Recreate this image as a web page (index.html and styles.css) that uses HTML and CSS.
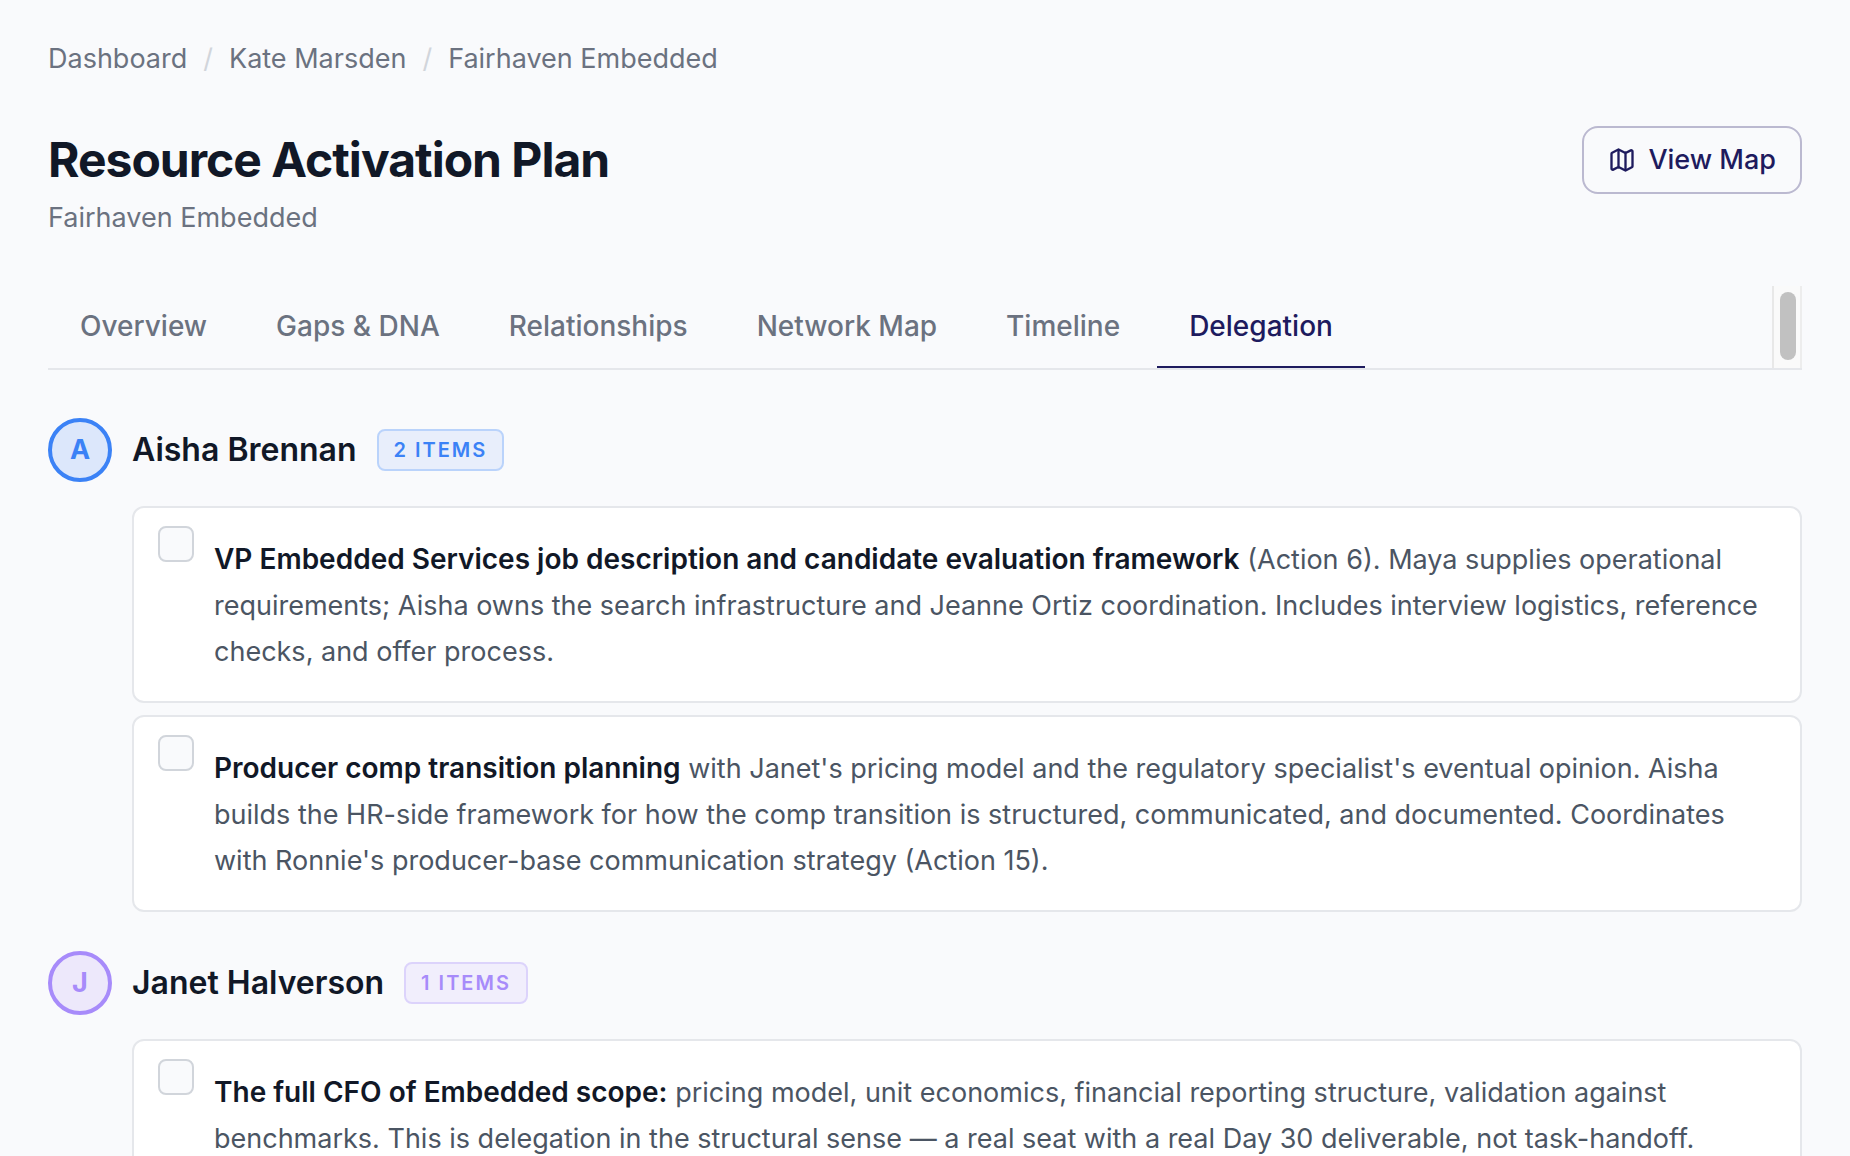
FILE: index.html
```html
<!DOCTYPE html>
<html lang="en">
<head>
<meta charset="utf-8">
<meta name="viewport" content="width=device-width, initial-scale=1">
<title>Resource Activation Plan</title>
<link rel="stylesheet" href="styles.css">
</head>
<body>
<main class="page">
  <nav class="breadcrumb" aria-label="Breadcrumb">
    <a href="#">Dashboard</a>
    <span class="breadcrumb-sep">/</span>
    <a href="#">Kate Marsden</a>
    <span class="breadcrumb-sep">/</span>
    <a href="#">Fairhaven Embedded</a>
  </nav>

  <header class="page-header">
    <div>
      <h1 class="title">Resource Activation Plan</h1>
      <p class="subtitle">Fairhaven Embedded</p>
    </div>
    <button class="map-button" type="button">
      <svg class="map-icon" viewBox="0 0 24 24" fill="none" stroke="currentColor" stroke-width="2" stroke-linecap="round" stroke-linejoin="round" aria-hidden="true">
        <path d="M14.106 5.553a2 2 0 0 0 1.788 0l3.659-1.83A1 1 0 0 1 21 4.619v12.764a1 1 0 0 1-.553.894l-4.553 2.277a2 2 0 0 1-1.788 0l-4.212-2.106a2 2 0 0 0-1.788 0l-3.659 1.83A1 1 0 0 1 3 19.381V6.618a1 1 0 0 1 .553-.894l4.553-2.277a2 2 0 0 1 1.788 0z"/>
        <path d="M15 5.764v15"/>
        <path d="M9 3.236v15"/>
      </svg>
      View Map
    </button>
  </header>

  <div class="tabs-bar">
    <nav class="tabs" aria-label="Plan sections">
      <a class="tab" href="#">Overview</a>
      <a class="tab" href="#">Gaps &amp; DNA</a>
      <a class="tab" href="#">Relationships</a>
      <a class="tab" href="#">Network Map</a>
      <a class="tab" href="#">Timeline</a>
      <a class="tab tab-active" href="#" aria-current="page">Delegation</a>
    </nav>
    <div class="scroll-track"><div class="scroll-thumb"></div></div>
  </div>

  <section class="person person-blue">
    <div class="person-header">
      <span class="avatar">A</span>
      <h2 class="person-name">Aisha Brennan</h2>
      <span class="badge">2 ITEMS</span>
    </div>
    <ul class="items">
      <li class="item">
        <input class="check" type="checkbox" id="item-1">
        <label class="item-text" for="item-1"><strong>VP Embedded Services job description and candidate evaluation framework</strong> (Action 6). Maya supplies operational requirements; Aisha owns the search infrastructure and Jeanne Ortiz coordination. Includes interview logistics, reference checks, and offer process.</label>
      </li>
      <li class="item">
        <input class="check" type="checkbox" id="item-2">
        <label class="item-text" for="item-2"><strong>Producer comp transition planning</strong> with Janet's pricing model and the regulatory specialist's eventual opinion. Aisha builds the HR-side framework for how the comp transition is structured, communicated, and documented. Coordinates with Ronnie's producer-base communication strategy (Action 15).</label>
      </li>
    </ul>
  </section>

  <section class="person person-violet">
    <div class="person-header">
      <span class="avatar">J</span>
      <h2 class="person-name">Janet Halverson</h2>
      <span class="badge">1 ITEMS</span>
    </div>
    <ul class="items">
      <li class="item">
        <input class="check" type="checkbox" id="item-3">
        <label class="item-text" for="item-3"><strong>The full CFO of Embedded scope:</strong> pricing model, unit economics, financial reporting structure, validation against benchmarks. This is delegation in the structural sense — a real seat with a real Day 30 deliverable, not task-handoff.</label>
      </li>
    </ul>
  </section>
</main>
</body>
</html>
```
FILE: styles.css
```css
* {
  box-sizing: border-box;
}

html {
  scrollbar-width: none;
}

body {
  margin: 0;
  background: #f9fafc;
  color: #111827;
  font-family: Inter, "Liberation Sans", sans-serif;
  font-size: 27px;
  line-height: 40px;
}

a {
  color: inherit;
  text-decoration: none;
}

h1,
h2,
p,
ul {
  margin: 0;
  padding: 0;
}

.page {
  padding: 39px 48px;
}

.breadcrumb {
  display: flex;
  gap: 16px;
  color: #6b7280;
}

.breadcrumb-sep {
  color: #d1d5db;
}

.page-header {
  display: flex;
  justify-content: space-between;
  align-items: flex-start;
  margin-top: 47px;
}

.title {
  margin-top: 6px;
  font-size: 48px;
  line-height: 56px;
  font-weight: 700;
  letter-spacing: -1px;
}

.subtitle {
  margin-top: 10px;
  color: #6b7280;
}

.map-button {
  display: flex;
  align-items: center;
  gap: 12px;
  height: 68px;
  padding: 0 24px;
  border: 2px solid #bbb9d0;
  border-radius: 16px;
  background: transparent;
  color: #1e1b5e;
  font: inherit;
  font-weight: 500;
}

.map-icon {
  width: 28px;
  height: 28px;
}

.tabs-bar {
  display: flex;
  justify-content: space-between;
  margin-top: 48px;
  border-bottom: 2px solid #e5e7eb;
}

.tabs {
  display: flex;
  gap: 5px;
}

.tab {
  padding: 20px 32px;
  border-bottom: 2px solid transparent;
  color: #6b7280;
  font-size: 28px;
  font-weight: 500;
}

.tab-active {
  border-bottom-color: #1e1b5e;
  color: #1e1b5e;
}

.scroll-track {
  display: flex;
  width: 30px;
  padding: 6px 4px 8px 6px;
  border-left: 2px solid #e8e8e8;
  border-right: 2px solid #ededed;
  background: #fafafa;
}

.scroll-thumb {
  width: 16px;
  border-radius: 8px;
  background: #c1c1c1;
}

.person {
  margin-top: 39px;
}

.tabs-bar + .person {
  margin-top: 48px;
}

.person-blue {
  --accent: #3b82f6;
  --avatar-fill: #dce7fb;
  --badge-fill: #e8eefb;
  --badge-line: #bad3fb;
}

.person-violet {
  --accent: #a78bfa;
  --avatar-fill: #ede8fb;
  --badge-fill: #f1eefc;
  --badge-line: #dcd3fb;
}

.person-header {
  display: flex;
  align-items: center;
  gap: 20px;
}

.avatar {
  display: flex;
  align-items: center;
  justify-content: center;
  width: 64px;
  height: 64px;
  border: 4px solid var(--accent);
  border-radius: 50%;
  background: var(--avatar-fill);
  color: var(--accent);
  font-weight: 700;
}

.person-name {
  font-size: 32px;
  font-weight: 600;
}

.badge {
  padding: 4px 15px;
  border: 2px solid var(--badge-line);
  border-radius: 8px;
  background: var(--badge-fill);
  color: var(--accent);
  font-size: 20px;
  line-height: 30px;
  font-weight: 600;
  letter-spacing: 2px;
}

.items {
  display: flex;
  flex-direction: column;
  gap: 12px;
  margin: 24px 0 0 84px;
  list-style: none;
}

.item {
  display: flex;
  align-items: flex-start;
  gap: 20px;
  padding: 18px 24px 26px;
  border: 2px solid #e5e7eb;
  border-radius: 12px;
  background: #ffffff;
}

.check {
  appearance: none;
  flex: none;
  width: 36px;
  height: 36px;
  margin: 0;
  border: 2px solid #d1d5db;
  border-radius: 8px;
  background: #f9fafc;
}

.check:checked {
  background: #1e1b5e;
}

.item-text {
  padding-top: 10px;
  color: #4b5563;
  line-height: 46px;
}

.item-text strong {
  color: #111827;
  font-size: 28px;
  font-weight: 600;
}
```
